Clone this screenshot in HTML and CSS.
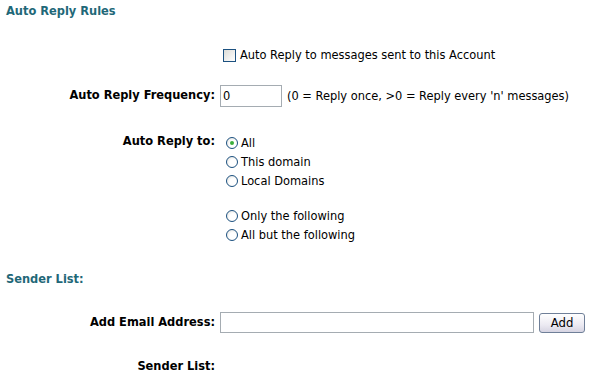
FILE: index.html
```html
<!DOCTYPE html>
<html>
<head>
<meta charset="utf-8">
<link rel="stylesheet" href="styles.css">
</head>
<body>
<div class="page">
  <h2 class="section">Auto Reply Rules</h2>
  <div class="row row-check">
    <div class="label"></div>
    <label class="value check"><span class="cb"></span>Auto Reply to messages sent to this Account</label>
  </div>
  <div class="row row-freq">
    <div class="label">Auto Reply Frequency:</div>
    <div class="value inline"><span class="input freq">0</span><span class="hint">(0 = Reply once, &gt;0 = Reply every 'n' messages)</span></div>
  </div>
  <div class="row row-to">
    <div class="label">Auto Reply to:</div>
    <div class="value radios">
      <label class="radio"><span class="rb on"></span>All</label>
      <label class="radio"><span class="rb"></span>This domain</label>
      <label class="radio"><span class="rb"></span>Local Domains</label>
      <label class="radio gap"><span class="rb"></span>Only the following</label>
      <label class="radio"><span class="rb"></span>All but the following</label>
    </div>
  </div>
  <h2 class="section sender">Sender List:</h2>
  <div class="row row-email">
    <div class="label">Add Email Address:</div>
    <div class="value inline"><span class="input email"></span><span class="btn">Add</span></div>
  </div>
  <div class="row row-list">
    <div class="label">Sender List:</div>
    <div class="value"></div>
  </div>
</div>
</body>
</html>
```
FILE: styles.css
```css
html, body {
  margin: 0;
  padding: 0;
  background: #ffffff;
}
body {
  font-family: "DejaVu Sans Condensed", "DejaVu Sans", sans-serif;
  font-size: 12.7px;
  color: #000;
}
.page {
  padding: 3px 0 0 6px;
  width: 594px;
}
.section {
  margin: 0;
  font-size: 12.7px;
  font-weight: bold;
  color: #1f6878;
  line-height: 16px;
}
.row {
  display: grid;
  grid-template-columns: 209px 1fr;
  column-gap: 5px;
}
.label {
  text-align: right;
  font-weight: bold;
  line-height: 20px;
}
.value {
  line-height: 20px;
}
.row-check { margin-top: 26px; }
.row-freq { margin-top: 20px; }
.row-to { margin-top: 34px; }
.row-to .label { line-height: 18px; margin-top: -9px; }
.sender { margin-top: 27px; }
.row-email { margin-top: 25px; }
.row-list { margin-top: 23px; }

.check {
  display: flex;
  align-items: center;
  padding-left: 3px;
}
.cb {
  width: 11px;
  height: 11px;
  border: 1px solid #1c5180;
  background: linear-gradient(135deg, #dcdcd7, #ffffff);
  margin-right: 4px;
}
.inline {
  display: flex;
  align-items: center;
}
.input {
  box-sizing: border-box;
  border: 1px solid #a5acb2;
  background: #fff;
  height: 22px;
  line-height: 20px;
  padding-left: 2px;
}
.freq { width: 62px; }
.hint { margin-left: 5px; }
.email { width: 314px; height: 21px; }
.btn {
  box-sizing: border-box;
  margin-left: 5px;
  width: 46px;
  height: 20px;
  line-height: 18px;
  text-align: center;
  border: 1px solid #6f7f98;
  border-radius: 3px;
  background: linear-gradient(#ffffff, #eceaf2 60%, #d6d4e2);
  font-size: 13px;
}
.radios {
  display: flex;
  flex-direction: column;
  margin-top: -8px;
}
.radio {
  display: flex;
  align-items: center;
  height: 19px;
  padding-left: 6px;
}
.radio.gap { margin-top: 16px; }
.rb {
  box-sizing: border-box;
  width: 12px;
  height: 12px;
  border-radius: 50%;
  border: 1px solid #1c5180;
  background: radial-gradient(circle at 60% 60%, #ffffff 40%, #dcdcd7);
  margin-right: 3px;
  position: relative;
}
.rb.on::after {
  content: "";
  position: absolute;
  left: 3px;
  top: 3px;
  width: 4px;
  height: 4px;
  border-radius: 50%;
  background: #3cae3c;
}
```
